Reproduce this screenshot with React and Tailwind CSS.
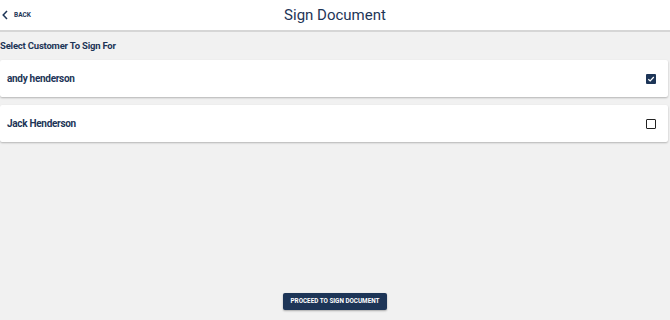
import { useState } from 'react';

const customers = [
  { id: 1, name: 'andy henderson' },
  { id: 2, name: 'Jack Henderson' },
];

const App = () => {
  const [selected, setSelected] = useState([1]);

  const toggle = (id) => {
    setSelected((s) => (s.includes(id) ? s.filter((x) => x !== id) : [...s, id]));
  };

  return (
    <div className="h-[320px] w-full bg-[#f1f1f1] flex flex-col font-['Roboto',sans-serif] text-[#1d3557] overflow-hidden">
      {/* Header */}
      <div className="h-[32px] bg-white border-b-2 border-[#d6d6d6] flex items-center relative shrink-0">
        <button className="flex items-center gap-[6px] pl-[2px] h-full">
          <svg width="6" height="10" viewBox="0 0 6 10" fill="none">
            <path d="M5 1 L1.2 5 L5 9" stroke="#1d3557" strokeWidth="1.5" />
          </svg>
          <span className="text-[6.5px] font-bold uppercase leading-none">Back</span>
        </button>
        <h1 className="absolute left-1/2 -translate-x-1/2 top-[5px] text-[15px] leading-[20px] text-[#1d3557] whitespace-nowrap">
          Sign Document
        </h1>
      </div>

      {/* Content */}
      <div className="flex-1 flex flex-col">
        <p className="text-[9.5px] font-bold tracking-[-0.2px] leading-[14px] mt-[7px] mb-[7px]">Select Customer To Sign For</p>
        <div className="flex flex-col gap-[8px] pr-[2px]">
          {customers.map((c) => {
            const on = selected.includes(c.id);
            return (
              <div
                key={c.id}
                onClick={() => toggle(c.id)}
                className="h-[37px] bg-white rounded-[2px] shadow-[0_1px_2px_rgba(0,0,0,0.25)] flex items-center justify-between pl-[7px] pr-[12px] cursor-pointer"
              >
                <span className="text-[10px] font-bold tracking-[-0.3px]">{c.name}</span>
                {on ? (
                  <span className="w-[10px] h-[10px] bg-[#1d3557] rounded-[1px] flex items-center justify-center">
                    <svg width="8" height="8" viewBox="0 0 8 8" fill="none">
                      <path d="M1.3 4.2 L3.2 6 L6.8 2" stroke="white" strokeWidth="1.2" />
                    </svg>
                  </span>
                ) : (
                  <span className="w-[10px] h-[10px] border-[1.5px] border-[#222] rounded-[1px]" />
                )}
              </div>
            );
          })}
        </div>
      </div>

      {/* Footer */}
      <div className="flex justify-center shrink-0 mb-[10px]">
        <button className="h-[17px] px-[8px] bg-[#1d3557] text-white text-[6.3px] font-bold uppercase rounded-[2px] shadow-[0_1px_2px_rgba(0,0,0,0.3)]">
          Proceed to Sign Document
        </button>
      </div>
    </div>
  );
};

export default App;
